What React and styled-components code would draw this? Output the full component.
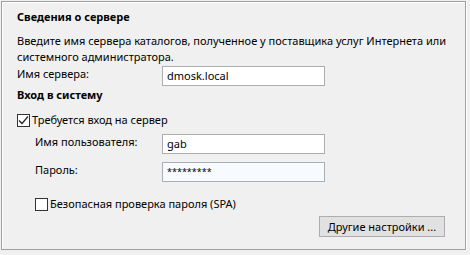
import styled, { createGlobalStyle } from 'styled-components';

const Global = createGlobalStyle`
  html, body {
    margin: 0;
    background: #f0f0f0;
  }
  body {
    font-family: "Noto Sans", "Open Sans", sans-serif;
    font-size: 11px;
    line-height: 16px;
    color: #000;
  }
`;

const Frame = styled.div`
  box-sizing: border-box;
  margin: 1px 0 0 1px;
  width: 465px;
  height: 249px;
  border: 1px solid #a0a0a0;
  box-shadow: inset 1px 1px #fff, 1px 1px #fff;
  padding: 7px 4px 0 15px;
`;

const Title = styled.div`
  font-weight: 700;
  margin-top: ${p => p.$top || 0}px;
`;

const Desc = styled.p`
  margin: 8px 0 0;
`;

const Row = styled.div`
  display: flex;
  align-items: flex-start;
  margin-top: ${p => p.$top || 0}px;
  padding-left: ${p => p.$indent || 0}px;
`;

const Label = styled.div`
  width: ${p => 145 - (p.$indent || 0)}px;
  flex: none;
`;

const Field = styled.div`
  box-sizing: border-box;
  width: 163px;
  height: 20px;
  border: 1px solid #abadb3;
  background: ${p => (p.$tint ? '#f7fbff' : '#fff')};
  padding: 0 4px;
  line-height: 18px;
  font-size: ${p => (p.$small ? '9px' : '11px')};
  white-space: nowrap;
  overflow: hidden;
`;

const CheckRow = styled.label`
  display: flex;
  align-items: center;
  gap: 2px;
  margin-top: ${p => p.$top || 0}px;
  padding-left: ${p => p.$indent || 0}px;
`;

const Box = styled.span`
  box-sizing: border-box;
  width: 13px;
  height: 13px;
  border: 1px solid #333;
  background: #fff;
  display: inline-flex;
  align-items: center;
  justify-content: center;
  flex: none;
`;

const Footer = styled.div`
  display: flex;
  justify-content: flex-end;
  margin-top: 4px;
  padding-right: 16px;
`;

const Button = styled.button`
  box-sizing: border-box;
  width: 126px;
  height: 21px;
  border: 1px solid #adadad;
  background: #e1e1e1;
  font: inherit;
  color: #000;
  padding: 0;
`;

function Check({ checked }) {
  return (
    <Box>
      {checked && (
        <svg width="11" height="11" viewBox="0 0 11 11">
          <path d="M1 5.5 L4 8.5 L10 1.5" fill="none" stroke="#222" strokeWidth="1.2" />
        </svg>
      )}
    </Box>
  );
}

export default function App() {
  return (
    <>
      <Global />
      <Frame>
        <Title>Сведения о сервере</Title>
        <Desc>
          Введите имя сервера каталогов, полученное у поставщика услуг Интернета или системного администратора.
        </Desc>
        <Row $top={1}>
          <Label>Имя сервера:</Label>
          <Field>dmosk.local</Field>
        </Row>
        <Title $top={1}>Вход в систему</Title>
        <CheckRow $top={9}>
          <Check checked />
          <span>Требуется вход на сервер</span>
        </CheckRow>
        <Row $top={6} $indent={18}>
          <Label $indent={18}>Имя пользователя:</Label>
          <Field>gab</Field>
        </Row>
        <Row $top={8} $indent={18}>
          <Label $indent={18}>Пароль:</Label>
          <Field $tint $small>*********</Field>
        </Row>
        <CheckRow $top={14} $indent={18}>
          <Check />
          <span>Безопасная проверка пароля (SPA)</span>
        </CheckRow>
        <Footer>
          <Button>Другие настройки ...</Button>
        </Footer>
      </Frame>
    </>
  );
}
